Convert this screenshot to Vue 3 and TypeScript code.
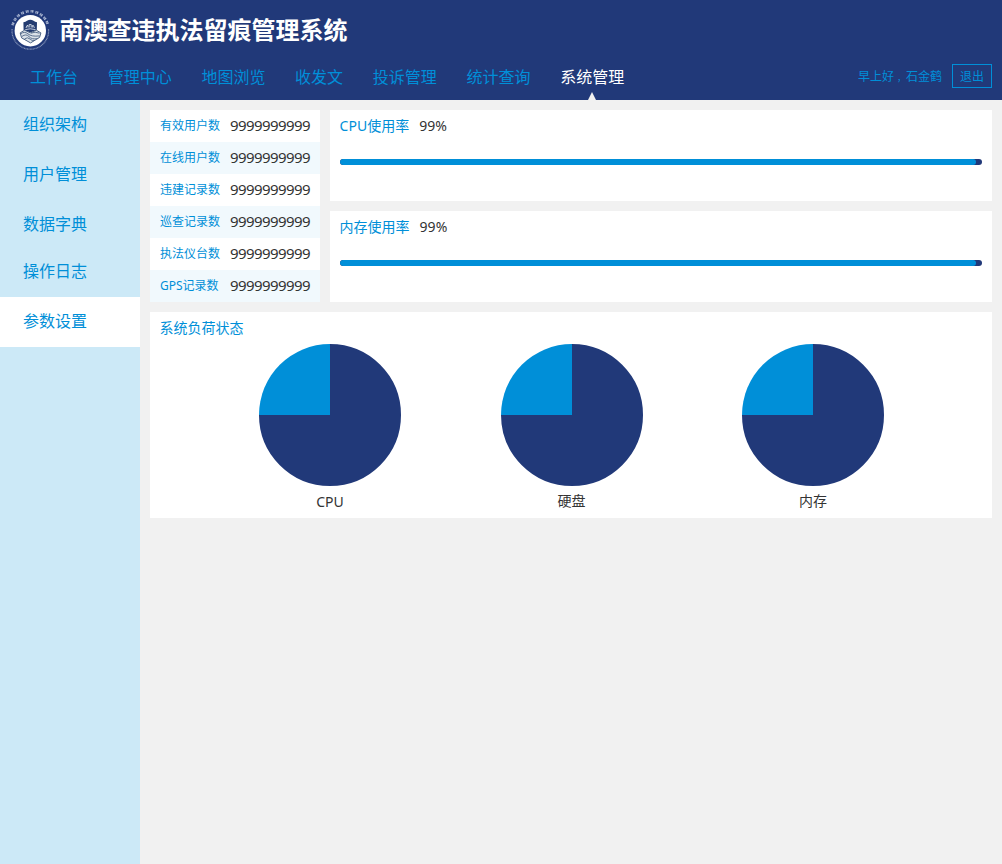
<script setup lang="ts">
interface Stat { label: string; value: string }
interface Usage { label: string; percent: number }
interface Load { label: string; used: number }

const nav: string[] = ['工作台', '管理中心', '地图浏览', '收发文', '投诉管理', '统计查询', '系统管理']
const activeNav = '系统管理'
const menu: string[] = ['组织架构', '用户管理', '数据字典', '操作日志', '参数设置']
const activeMenu = '参数设置'
const stats: Stat[] = ['有效用户数', '在线用户数', '违建记录数', '巡查记录数', '执法仪台数', 'GPS记录数']
  .map((label) => ({ label, value: '9999999999' }))
const usages: Usage[] = [
  { label: 'CPU使用率', percent: 99 },
  { label: '内存使用率', percent: 99 },
]
const loads: Load[] = [
  { label: 'CPU', used: 75 },
  { label: '硬盘', used: 75 },
  { label: '内存', used: 75 },
]
</script>

<template>
  <div class="page">
    <header class="header">
      <div class="brand">
        <svg class="logo" viewBox="0 0 40 40" aria-hidden="true">
          <circle cx="20.3" cy="20.7" r="15.7" fill="#fff" />
          <path d="M2.6 15.2A18.2 18.2 0 0 1 38 15.2" fill="none" stroke="#a9b5d1" stroke-width="2.6" stroke-dasharray="1.1 .4 1.4 2" />
          <path d="M2.1 19A18.3 18.3 0 1 0 38.5 19" fill="none" stroke="#8493b8" stroke-width="1.2" stroke-dasharray="1 .5" />
          <path d="M13.4 12.2Q15.7 12 17 10.8Q20.3 8.6 23.6 10.8Q25 12 27 12.2L26.8 20L20.4 22.6L13.6 20Z" fill="#243c70" />
          <path d="M16 18l1-2.5h1v2m1.2 0v-3h2v3m1.2 0v-2h1l1 2.5M15.3 19.6l5-.8 5.2.8" fill="none" stroke="#e9eef5" stroke-width=".8" />
          <path d="M10.2 22.9L14.5 20.2 20.4 22.8 26.3 20.2 30.9 22.9 29.6 27.4 20.6 32.9 11.6 27.9Z" fill="#dbe2e8" stroke="#4d6484" stroke-width="1" />
          <path d="M10.5 23.9q4-3 7.5 0t11.5 2M12 26.4q4-3 7 .2t8.5 2M14.5 29q3-2.4 5.5 0t4 1.4M21 23.2q4-2 8.5 0" fill="none" stroke="#4d6484" stroke-width=".9" />
        </svg>
        <h1 class="title">南澳查违执法留痕管理系统</h1>
      </div>
      <div class="bar">
        <nav class="nav">
          <a v-for="item in nav" :key="item" class="nav-item" :class="{ active: item === activeNav }">{{ item }}</a>
        </nav>
        <div class="account">
          <span class="greeting">早上好<span class="comma">，</span>石金鹤</span>
          <button class="logout" type="button">退出</button>
        </div>
      </div>
    </header>

    <div class="body">
      <aside class="sidebar">
        <a v-for="item in menu" :key="item" class="menu-item" :class="{ active: item === activeMenu }">{{ item }}</a>
      </aside>

      <main class="content">
        <div class="top">
          <section class="stats">
            <div v-for="s in stats" :key="s.label" class="stat">
              <span class="stat-label">{{ s.label }}</span>
              <span class="stat-value">{{ s.value }}</span>
            </div>
          </section>
          <div class="usages">
            <section v-for="u in usages" :key="u.label" class="usage">
              <div class="usage-head">
                <span class="usage-label">{{ u.label }}</span>
                <span class="usage-value">{{ u.percent }}%</span>
              </div>
              <div class="track"><div class="fill" :style="{ width: u.percent + '%' }"></div></div>
            </section>
          </div>
        </div>

        <section class="loads">
          <h2 class="loads-title">系统负荷状态</h2>
          <div class="pies">
            <figure v-for="l in loads" :key="l.label" class="pie">
              <svg width="142" height="142" viewBox="0 0 142 142">
                <path d="M71 71H0A71 71 0 0 1 71 0Z" fill="#008fd8" />
                <circle
                  cx="71" cy="71" r="35.5" fill="none" stroke="#213979" stroke-width="71" pathLength="100"
                  :stroke-dasharray="l.used + ' 100'" transform="rotate(-90 71 71)"
                />
              </svg>
              <figcaption class="caption">{{ l.label }}</figcaption>
            </figure>
          </div>
        </section>
      </main>
    </div>
  </div>
</template>

<style>
body { margin: 0; }
</style>

<style scoped>
.page {
  width: 1002px;
  height: 864px;
  display: flex;
  flex-direction: column;
  overflow: hidden;
  background: #f1f1f1;
  color: #333;
  font-family: "Noto Sans", "Noto Sans CJK SC", sans-serif;
  font-size: 14px;
}
.header { height: 100px; flex: none; background: #213979; }
.brand { display: flex; height: 60px; padding-left: 10px; align-items: center; gap: 9.5px; }
.logo { width: 40px; height: 40px; flex: none; }
.title {
  margin: 0;
  color: #fff;
  font: 700 24px/34px "Noto Sans CJK SC", sans-serif;
  padding-bottom: 2px;
  white-space: nowrap;
}
.bar { display: flex; height: 40px; justify-content: space-between; padding: 0 10px 0 30px; }
.nav { display: flex; gap: 29.7px; }
.nav-item {
  position: relative;
  font: 400 16px/32px "Noto Sans CJK SC", sans-serif;
  color: #008fd8;
}
.nav-item.active { color: #fff; }
.nav-item.active::after {
  content: "";
  position: absolute;
  left: 50%;
  bottom: 0;
  margin-left: -4.5px;
  border: 4.5px solid transparent;
  border-top: 0;
  border-bottom: 8px solid #f1f1f1;
}
.account { display: flex; gap: 10px; color: #008fd8; }
.greeting { font: 400 12px/32px "Noto Sans CJK SC", sans-serif; }
.comma { padding-left: 3px; font-size: 9px; line-height: 1; }
.logout {
  box-sizing: border-box;
  width: 40px;
  height: 24px;
  margin: 4px 0 0;
  padding: 0;
  border: 1px solid #008fd8;
  background: none;
  color: inherit;
  font: 400 12px/20px "Noto Sans CJK SC", sans-serif;
}
.body { flex: 1; display: flex; min-height: 0; }
.sidebar { width: 140px; flex: none; background: #cce9f7; }
.menu-item {
  display: block;
  height: 50px;
  padding-left: 23px;
  font: 400 16px/47px "Noto Sans CJK SC", sans-serif;
  color: #008fd8;
}
.menu-item:nth-child(3) { height: 47px; }
.menu-item.active { background: #fff; }
.content { flex: 1; padding: 10px; display: flex; flex-direction: column; gap: 10px; }
.top { display: flex; gap: 10px; height: 192px; }
.stats { width: 170px; flex: none; background: #fff; }
.stat {
  display: flex;
  justify-content: space-between;
  height: 32px;
  padding: 0 10px;
}
.stat:nth-child(even) { background: #f1f9fd; }
.stat-label { font-size: 12px; line-height: 32px; color: #008fd8; }
.stat-value { font-size: 15px; line-height: 30px; letter-spacing: -0.58px; }
.usages { flex: 1; display: flex; flex-direction: column; gap: 10px; }
.usage { flex: 1; background: #fff; padding: 0 10px; }
.usage-head { display: flex; gap: 10px; height: 49px; line-height: 31px; }
.usage-label { color: #008fd8; margin-left: -0.4px; }
.track { height: 6px; border-radius: 3px; background: #213979; overflow: hidden; }
.fill { height: 6px; border-radius: 3px; background: #008fd8; }
.loads { height: 206px; background: #fff; }
.loads-title {
  margin: 0;
  height: 32px;
  padding-left: 9.6px;
  font: 400 14px/31px "Noto Sans CJK SC", sans-serif;
  color: #008fd8;
}
.pies { display: flex; gap: 99.6px; justify-content: center; padding-left: 1px; }
.pie { margin: 0; width: 142px; display: flex; flex-direction: column; align-items: center; }
.caption { line-height: 30px; }
.pie:first-child .caption { line-height: 32px; }
</style>
